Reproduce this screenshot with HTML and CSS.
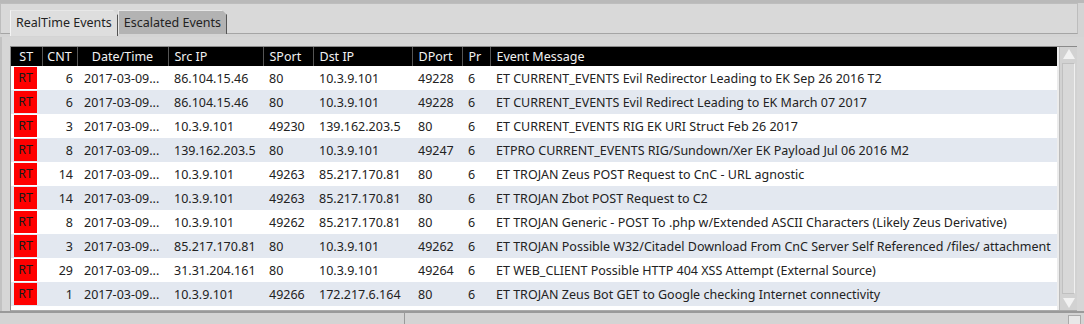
FILE: index.html
```html
<!DOCTYPE html>
<html lang="en">

<head>
    <meta charset="UTF-8" />
    <title>Events</title>
    <link rel="stylesheet" href="styles.css">
</head>

<body>
    <div class="window">
        <div class="tab-bar">
            <div class="tab active">RealTime Events</div>
            <div class="tab">Escalated Events</div>
        </div>
        <div class="pane">
            <div class="grid-frame">
                <div class="grid-scroll">
                    <table class="events">
                        <colgroup>
                            <col class="c-st"><col class="c-cnt"><col class="c-date"><col class="c-src">
                            <col class="c-sport"><col class="c-dst"><col class="c-dport"><col class="c-pr"><col>
                        </colgroup>
                        <thead>
                            <tr>
                                <th class="center">ST</th>
                                <th class="center">CNT</th>
                                <th class="center">Date/Time</th>
                                <th>Src IP</th>
                                <th>SPort</th>
                                <th>Dst IP</th>
                                <th>DPort</th>
                                <th>Pr</th>
                                <th>Event Message</th>
                            </tr>
                        </thead>
                        <tbody id="rows"></tbody>
                    </table>
                </div>
                <div class="vscroll">
                    <div class="arrow up"></div>
                    <div class="track"></div>
                    <div class="arrow down"></div>
                </div>
            </div>
        </div>
        <div class="status">
            <div class="status-left"></div>
            <div class="status-right"></div>
            <div class="grip"></div>
        </div>
    </div>

    <script>
        const events = [
            [6, "86.104.15.46", "80", "10.3.9.101", "49228", "ET CURRENT_EVENTS Evil Redirector Leading to EK Sep 26 2016 T2"],
            [6, "86.104.15.46", "80", "10.3.9.101", "49228", "ET CURRENT_EVENTS Evil Redirect Leading to EK March 07 2017"],
            [3, "10.3.9.101", "49230", "139.162.203.5", "80", "ET CURRENT_EVENTS RIG EK URI Struct Feb 26 2017"],
            [8, "139.162.203.5", "80", "10.3.9.101", "49247", "ETPRO CURRENT_EVENTS RIG/Sundown/Xer EK Payload Jul 06 2016 M2"],
            [14, "10.3.9.101", "49263", "85.217.170.81", "80", "ET TROJAN Zeus POST Request to CnC - URL agnostic"],
            [14, "10.3.9.101", "49263", "85.217.170.81", "80", "ET TROJAN Zbot POST Request to C2"],
            [8, "10.3.9.101", "49262", "85.217.170.81", "80", "ET TROJAN Generic - POST To .php w/Extended ASCII Characters (Likely Zeus Derivative)"],
            [3, "85.217.170.81", "80", "10.3.9.101", "49262", "ET TROJAN Possible W32/Citadel Download From CnC Server Self Referenced /files/ attachment"],
            [29, "31.31.204.161", "80", "10.3.9.101", "49264", "ET WEB_CLIENT Possible HTTP 404 XSS Attempt (External Source)"],
            [1, "10.3.9.101", "49266", "172.217.6.164", "80", "ET TROJAN Zeus Bot GET to Google checking Internet connectivity"]
        ];

        const body = document.getElementById("rows");
        events.forEach(function (e) {
            const tr = document.createElement("tr");
            tr.innerHTML =
                '<td><span class="badge">RT</span></td>' +
                '<td class="num">' + e[0] + '</td>' +
                '<td class="date">2017-03-09...</td>' +
                '<td>' + e[1] + '</td>' +
                '<td>' + e[2] + '</td>' +
                '<td>' + e[3] + '</td>' +
                '<td>' + e[4] + '</td>' +
                '<td>6</td>' +
                '<td class="msg">' + e[5] + '</td>';
            body.appendChild(tr);
        });
    </script>
</body>

</html>
```

FILE: styles.css
```css
body {
    margin: 0;
    background: #d4d4d4;
    font-family: "Noto Sans", sans-serif;
    font-size: 12.5px;
    color: #222;
}

.window {
    height: 324px;
    display: flex;
    flex-direction: column;
    border-top: 3px solid #b9b9b9;
    box-sizing: border-box;
}

.tab-bar {
    display: flex;
    height: 31px;
    padding: 6px 0 0 9px;
    box-sizing: border-box;
    background: #d9d9d9;
    border: 1px solid #bdbdbd;
    border-bottom: 1px solid #a5a5a5;
    margin-right: 6px;
}

.tab {
    height: 23px;
    line-height: 23px;
    padding: 0 5px;
    background: #b3b3b3;
    border-left: 1px solid #e8e8e8;
    border-right: 1px solid #555;
    border-top: 1px solid #e8e8e8;
    color: #222;
    white-space: nowrap;
    clip-path: polygon(0 0, calc(100% - 5px) 0, 100% 5px, 100% 100%, 0 100%);
}

.tab.active {
    background: #dedede;
    border-left: 1px solid #f4f4f4;
    border-right: 1px solid #333;
    height: 25px;
}

.pane {
    flex: 1;
    padding: 9px 7px 0 8px;
    border-left: 2px solid #c2c2c2;
    margin-top: 3px;
    background: #d6d6d6;
}

.grid-frame {
    display: flex;
    height: 263px;
    border-left: 1px solid #8a8a8a;
    border-top: 1px solid #8a8a8a;
    border-bottom: 1px solid #aaa;
    background: #ececec;
}

.grid-scroll {
    flex: 1;
    overflow: hidden;
    background: #fff;
}

.events {
    width: 100%;
    border-collapse: collapse;
    table-layout: fixed;
}

.c-st { width: 31px; }
.c-cnt { width: 35px; }
.c-date { width: 91px; }
.c-src { width: 95px; }
.c-sport { width: 50px; }
.c-dst { width: 99px; }
.c-dport { width: 50px; }
.c-pr { width: 28px; }

.events th {
    height: 19px;
    padding: 0 6px;
    background: #000;
    color: #f2f2f2;
    font-weight: normal;
    text-align: left;
    border-left: 1px solid #555;
    white-space: nowrap;
}

.events th:first-child {
    border-left: none;
}

.events th.center {
    text-align: center;
    padding: 0;
}

.events td {
    height: 24px;
    padding: 0 6px;
    white-space: nowrap;
    overflow: hidden;
}

.events tbody tr:nth-child(even) {
    background: #e3e8f0;
}

.events td:first-child {
    padding: 0 0 0 3px;
}

.events td.num {
    text-align: right;
    padding-right: 4px;
}

.events td.date {
    padding-left: 7px;
}

.events td.msg {
    overflow: visible;
}

.badge {
    display: block;
    width: 23px;
    height: 22px;
    line-height: 22px;
    background: #ff0000;
    color: #1a1a1a;
    text-align: center;
}

.vscroll {
    width: 17px;
    margin-left: 2px;
    display: flex;
    flex-direction: column;
    background: #d2d2d2;
    border-left: 1px solid #bbb;
}

.arrow {
    height: 14px;
    position: relative;
}

.arrow::after {
    content: "";
    position: absolute;
    left: 3px;
    width: 0;
    height: 0;
    border-left: 6px solid transparent;
    border-right: 6px solid transparent;
}

.arrow.up::after {
    top: 2px;
    border-bottom: 10px solid #f2f2f2;
}

.arrow.down::after {
    bottom: 2px;
    border-top: 10px solid #f2f2f2;
}

.track {
    flex: 1;
    margin: 2px;
    background: #d8d8d8;
    border: 1px solid #c0c0c0;
    border-right-color: #f0f0f0;
}

.status {
    display: flex;
    height: 13px;
    border-top: 2px solid #9a9a9a;
    background: #d4d4d4;
    position: relative;
}

.status-left {
    width: 404px;
    border-right: 1px solid #9a9a9a;
}

.status-right {
    flex: 1;
}

.grip {
    position: absolute;
    right: 3px;
    top: 2px;
    width: 11px;
    height: 11px;
    background: #e8e8e8;
    border: 1px solid #aaa;
}
```
